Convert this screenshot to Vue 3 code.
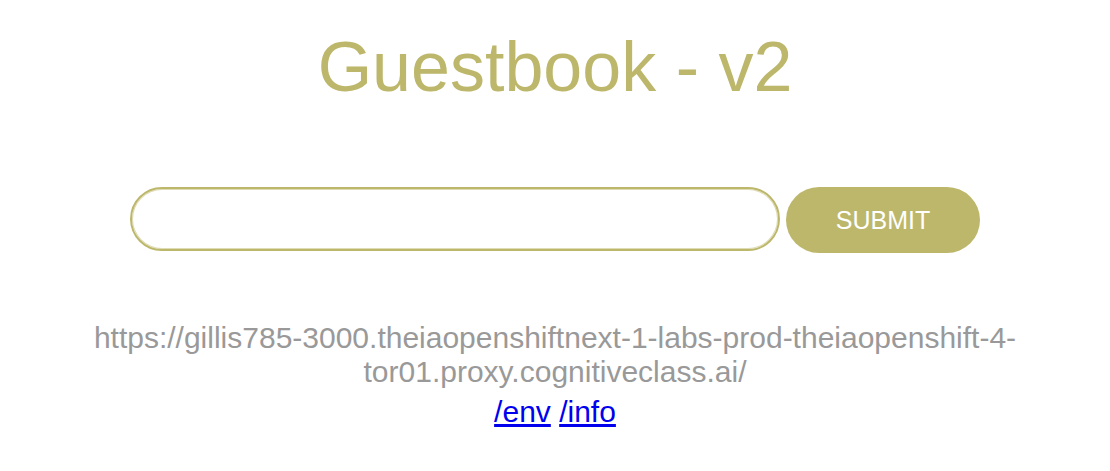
<script setup>
import { ref } from 'vue'

const entry = ref('')
</script>

<template>
  <div class="page">
    <header>
      <h1>Guestbook - v2</h1>
    </header>
    <form class="entry-form" @submit.prevent>
      <input v-model="entry" class="entry" type="text" aria-label="Guestbook entry" autocomplete="off" />
      <button class="submit" type="submit">SUBMIT</button>
    </form>
    <footer>
      <p class="host">https://gillis785-3000.theiaopenshiftnext-1-labs-prod-theiaopenshift-4-tor01.proxy.cognitiveclass.ai/</p>
      <p class="links"><a href="/env">/env</a> <a href="/info">/info</a></p>
    </footer>
  </div>
</template>

<style>
body {
  margin: 0;
  background: #fff;
}
</style>

<style scoped>
.page {
  padding: 27px 80px 0;
  font-family: "Liberation Sans", Arial, sans-serif;
  text-align: center;
}

h1 {
  margin: 0;
  color: #bdb76b;
  font-size: 70px;
  font-weight: 400;
  line-height: 80px;
}

.entry-form {
  display: flex;
  gap: 6px;
  max-width: 850px;
  margin: 80px auto 0;
}

.entry {
  flex: 1;
  min-width: 0;
  box-sizing: border-box;
  height: 64px;
  padding: 0 28px;
  border: 2px solid #bdb76b;
  border-radius: 32px;
  box-shadow: inset 0 0 0 1px #dedbb5;
  background: #fff;
  color: #333;
  font: 25px "Liberation Sans", Arial, sans-serif;
  outline: none;
}

.submit {
  width: 194px;
  height: 66px;
  padding: 0;
  border: 0;
  border-radius: 33px;
  background: #bdb76b;
  color: #fff;
  font: 25px "Liberation Sans", Arial, sans-serif;
  cursor: pointer;
}

footer {
  margin-top: 68px;
  color: #999;
  font-size: 30px;
  line-height: 34px;
}

p {
  margin: 0;
}

.links {
  margin-top: 6px;
}

a {
  color: #0000ee;
  text-decoration-thickness: 3px;
}
</style>
